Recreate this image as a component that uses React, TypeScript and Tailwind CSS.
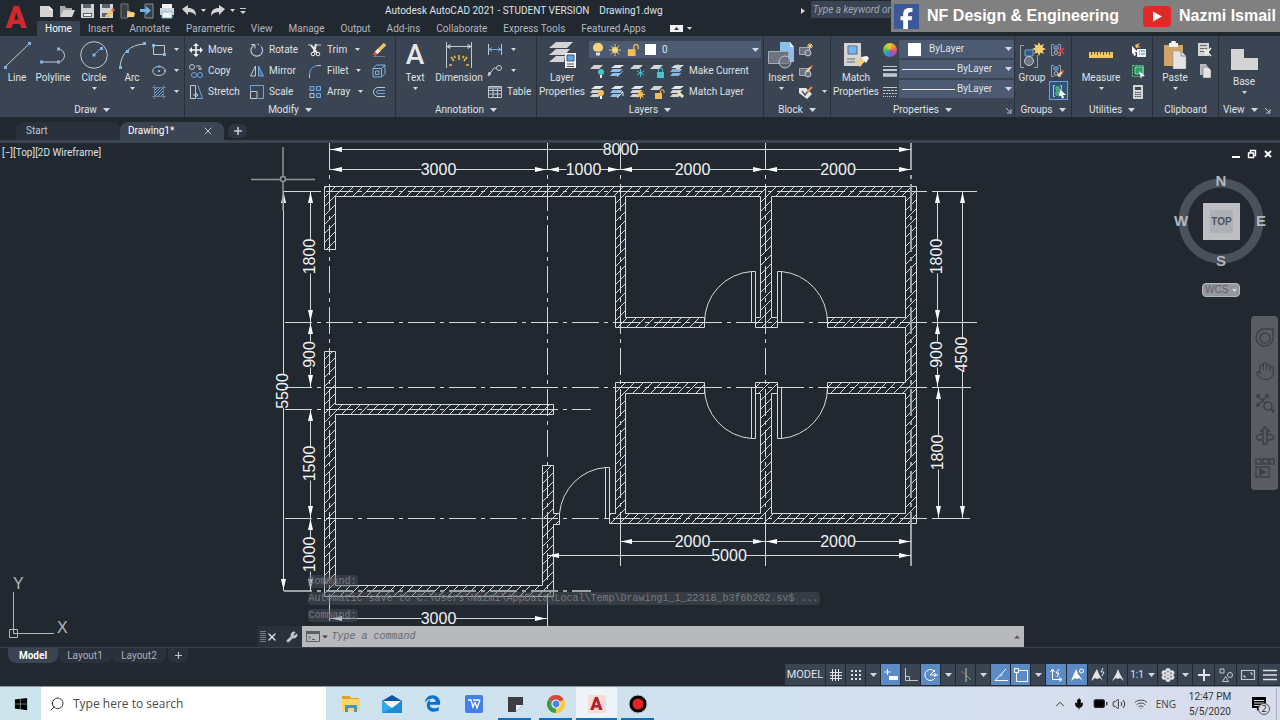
import React from "react";
import clsx from "clsx";
import { FaFacebookF, FaEdgeLegacy, FaWindows } from "react-icons/fa6";
import {
  BatteryMedium,
  ChevronUp,
  Hand,
  Mic,
  Search,
  Settings,
  Volume2,
  Wifi,
  Wrench,
  X,
} from "lucide-react";

type Kids = { children?: React.ReactNode };

/* ---------- small shared pieces ---------- */

const Icon = ({
  size = "size-4",
  box = "0 0 16 16",
  children,
}: Kids & { size?: string; box?: string }) => (
  <svg className={clsx(size, "shrink-0")} viewBox={box} fill="none" stroke="#c3c8d0" aria-hidden="true">
    {children}
  </svg>
);

const Caret = ({ wide = false }: { wide?: boolean }) => (
  <svg
    className={clsx("shrink-0", wide ? "h-[4px] w-[7px]" : "h-[3px] w-[5px]")}
    viewBox="0 0 8 4"
    preserveAspectRatio="none"
    aria-hidden="true"
  >
    <path d="M0 0h8L4 4z" fill="#d5d8de" />
  </svg>
);

const BigButton = ({
  width,
  label,
  caret,
  children,
}: Kids & { width: string; label: string; caret?: boolean }) => (
  <button className={clsx("flex shrink-0 flex-col items-center", width)}>
    <span className="flex h-8 items-center justify-center">{children}</span>
    <span className="text-center leading-[14px] whitespace-pre">{label}</span>
    {caret && (
      <span className="mt-0.5">
        <Caret />
      </span>
    )}
  </button>
);

const Tool = ({
  icon,
  label,
  caret,
  name,
}: {
  icon: React.ReactNode;
  label?: string;
  caret?: boolean;
  name?: string;
}) => (
  <button aria-label={name ?? label} className="flex h-[21px] items-center gap-1 whitespace-nowrap">
    {icon}
    {label}
    {caret && (
      <span className="ml-1">
        <Caret />
      </span>
    )}
  </button>
);

const Panel = ({
  width,
  title,
  caret = true,
  launcher,
  children,
}: Kids & { width: string; title: string; caret?: boolean; launcher?: boolean }) => (
  <section className={clsx("flex shrink-0 flex-col border-r border-[#29303c] pt-[3px]", width)}>
    <div className="flex h-[63px]">{children}</div>
    <div className="relative flex h-[15px] items-center justify-center gap-1.5 pt-px">
      {title}
      {caret && <Caret wide />}
      {launcher && (
        <svg className="absolute right-0.5 size-[7px]" viewBox="0 0 7 7" fill="none" stroke="#c3c8d0">
          <path d="M1 1l4 4M6 2v4H2" />
        </svg>
      )}
    </div>
  </section>
);

/* ---------- title bar ---------- */

const QuickAccess = () => (
  <div className="flex items-center gap-1">
    <button aria-label="New">
      <Icon>
        <path d="M1 3h9l4 4v7H1z" fill="#d4d4d4" stroke="none" />
        <path d="M10 3v4h4z" fill="#fff" stroke="none" />
      </Icon>
    </button>
    <button aria-label="Open">
      <Icon>
        <path d="M1 14V3h5l1 2h6v2H4z" fill="#a5a7a9" stroke="none" />
        <path d="M4 7h12l-3 7H1z" fill="#d4d4d4" stroke="none" />
      </Icon>
    </button>
    <button aria-label="Save">
      <Icon>
        <path d="M2 1h13v14H2z" fill="#d4d4d4" stroke="none" />
        <path d="M4 1h8v4H4zM4 10h9v4H4z" fill="#5d636b" stroke="none" />
        <path d="M5 11h7v2H5z" fill="#eee" stroke="none" />
      </Icon>
    </button>
    <button aria-label="Save As">
      <Icon>
        <path d="M1 1h13v14H1z" fill="#d4d4d4" stroke="none" />
        <path d="M3 1h8v4H3zM3 10h7v4H3z" fill="#5d636b" stroke="none" />
        <path d="M7 14l6-6" stroke="#f3c15b" strokeWidth="3" />
        <path d="M13 8l2-2" stroke="#e06a4f" strokeWidth="3" />
      </Icon>
    </button>
    <button aria-label="Open from web and mobile">
      <Icon>
        <path d="M2 1h7v14H2z" fill="#3a3d42" stroke="#77797c" />
        <path d="M8 8h3l1 1h3v5H8z" fill="#e8b953" stroke="none" />
        <path d="M9 10h7l-1 4H8z" fill="#f6d685" stroke="none" />
      </Icon>
    </button>
    <button aria-label="Save to web and mobile">
      <Icon>
        <path d="M6 1h8v14H6z" fill="#3a3d42" stroke="#8b8f94" />
        <path d="M1 6h6V3l5 4.500-5 4.500V9H1z" fill="#6fb5e8" stroke="none" />
      </Icon>
    </button>
    <button aria-label="Plot">
      <Icon>
        <path d="M3 1h10v5H3z" fill="#f2f2f2" stroke="none" />
        <path d="M1 5h14v7H1z" fill="#cfd3d8" stroke="none" />
        <path d="M3 9h10v6H3z" fill="#f6f6f6" stroke="#8ab6dc" />
      </Icon>
    </button>
    <button aria-label="Undo" className="ml-0.5">
      <Icon>
        <path d="M1 6l6-4v3c5 0 8 2 8 8-2-3-4-4-8-4v3z" fill="#d4d4d4" stroke="none" />
      </Icon>
    </button>
    <Caret />
    <button aria-label="Redo">
      <Icon>
        <path d="M15 6L9 2v3c-5 0-8 2-8 8 2-3 4-4 8-4v3z" fill="#d4d4d4" stroke="none" />
      </Icon>
    </button>
    <Caret />
    <button aria-label="Customize">
      <Icon size="size-2" box="0 0 8 8">
        <path d="M1 1.500h6" />
        <path d="M1 4h6L4 7z" fill="#d4d4d4" stroke="none" />
      </Icon>
    </button>
  </div>
);

const menuTabs = [
  "Insert",
  "Annotate",
  "Parametric",
  "View",
  "Manage",
  "Output",
  "Add-ins",
  "Collaborate",
  "Express Tools",
  "Featured Apps",
];

const Header = () => (
  <header className="relative flex h-9">
    <button
      aria-label="Application menu"
      className="w-8 shrink-0 text-center text-[31px] leading-8 font-black text-[#d0282c]"
    >
      A
    </button>
    <div className="flex min-w-0 flex-1 flex-col">
      <div className="flex h-[21px] items-center pl-[7px]">
        <QuickAccess />
        <h1 className="ml-[138px] whitespace-pre text-[#dfe2e6]">
          {"Autodesk AutoCAD 2021 - STUDENT VERSION    Drawing1.dwg"}
        </h1>
        <svg className="ml-[138px] h-1.5 w-1 shrink-0" viewBox="0 0 4 6">
          <path d="M0 0l4 3-4 3z" fill="#d5d8de" />
        </svg>
        <input
          aria-label="Search help"
          placeholder="Type a keyword or phrase"
          className="mb-0.5 ml-1.5 h-[17px] w-40 bg-[#3b4453] px-0.5 italic placeholder:text-[#a3a9b3]"
        />
      </div>
      <nav className="flex h-[15px] pl-[5px] leading-[15px] text-[#b3b8c0]">
        <a href="#home" className="bg-[#3b4453] px-2 text-white">
          Home
        </a>
        {menuTabs.map((tab) => (
          <a key={tab} href={"#" + tab.toLowerCase()} className="px-2 whitespace-nowrap">
            {tab}
          </a>
        ))}
        <button aria-label="Minimize ribbon" className="ml-4 flex items-center gap-1">
          <svg className="h-[7px] w-[13px]" viewBox="0 0 13 7">
            <path d="M0 0h13v7H0z" fill="#f1f1f1" />
            <path d="M4 5h5L6.500 2z" fill="#333" />
          </svg>
          <Caret />
        </button>
      </nav>
    </div>
    <div className="absolute top-0 right-0 flex h-8 items-center bg-[#808080] pr-1 pl-[3px] font-['Liberation_Sans',sans-serif] text-base font-bold text-white">
      <span className="mr-2 flex size-[25px] items-end justify-center bg-[#3b5998]">
        <FaFacebookF className="size-[21px]" />
      </span>
      NF Design &amp; Engineering
      <svg className="mr-2 ml-6 h-[21px] w-7" viewBox="0 0 28 21">
        <rect width="28" height="21" rx="4" fill="#e02a2a" />
        <path d="M10 5.500l9 5-9 5z" fill="#fff" />
      </svg>
      Nazmi Ismail
    </div>
  </header>
);

/* ---------- ribbon ---------- */

const DrawPanel = () => (
  <Panel width="w-[185px]" title="Draw">
    <BigButton width="w-[34px]" label="Line">
      <Icon size="size-7" box="0 0 28 28">
        <path d="M2 26L26 3" />
        <path d="M1 25h3v3H1zM25 1h3v3h-3z" fill="#7fb4e6" stroke="none" />
      </Icon>
    </BigButton>
    <BigButton width="w-[38px]" label="Polyline">
      <Icon size="size-7" box="0 0 28 28">
        <path d="M2 21h17a6.500 6.500 0 0 0 0-13" />
        <path d="M1 19.500h3v3H1zM18 19.500h3v3h-3zM18 6.500h3v3h-3z" fill="#7fb4e6" stroke="none" />
      </Icon>
    </BigButton>
    <BigButton width="w-11" label="Circle" caret>
      <Icon size="size-7" box="0 0 28 28">
        <circle cx="14" cy="14" r="13.300" />
        <path d="M14 14l7-7" stroke="#6ea8de" />
        <path d="M12.500 12.500h3v3h-3zM20 6h3v3h-3z" fill="#7fb4e6" stroke="none" />
      </Icon>
    </BigButton>
    <BigButton width="w-8" label="Arc" caret>
      <Icon size="size-7" box="0 0 28 28">
        <path d="M2 26C3 12 12 4 26 3" />
        <path d="M1 25h3v3H1zM25 1h3v3h-3zM8 9h3v3H8z" fill="#7fb4e6" stroke="none" />
      </Icon>
    </BigButton>
    <div className="ml-1 flex flex-col">
      <Tool
        name="Rectangle"
        caret
        icon={
          <Icon size="h-4 w-[14px]" box="0 0 14 16">
            <path d="M1.500 3.500h11v9h-11z" />
            <path d="M0 2h3v3H0z" fill="#7fb4e6" stroke="none" />
            <path d="M11 11h3v3h-3z" fill="#7fb4e6" stroke="none" />
          </Icon>
        }
      />
      <Tool
        name="Ellipse"
        caret
        icon={
          <Icon size="h-4 w-[14px]" box="0 0 14 16">
            <ellipse cx="7" cy="8" rx="6.300" ry="4.500" />
            <path d="M6 7h2v2H6zM12 7h2v2h-2zM6 2.500h2v2H6z" fill="#7fb4e6" stroke="none" />
          </Icon>
        }
      />
      <Tool
        name="Hatch"
        caret
        icon={
          <Icon size="h-4 w-[14px]" box="0 0 14 16">
            <path d="M2.500 1v14M11.500 1v14M0 3.500h14M0 12.500h14" stroke="#737c8b" />
            <path d="M3 6l2-2M3 9l5-5M3 12l8-8M6 12l5-5M9 12l2-2" stroke="#6ea8de" />
          </Icon>
        }
      />
    </div>
  </Panel>
);

const ModifyPanel = () => (
  <Panel width="w-[211px]" title="Modify">
    <div className="grid grid-cols-[61px_58px_64px_16px] grid-rows-3 pl-[3px]">
      <Tool
        label="Move"
        icon={
          <Icon>
            <path d="M8 3v10M3 8h10" stroke="#f2f2f2" strokeWidth="1.600" />
            <path d="M8 1l3 3H5zM8 15l3-3H5zM1 8l3-3v6zM15 8l-3-3v6z" fill="#f2f2f2" stroke="none" />
          </Icon>
        }
      />
      <Tool
        label="Rotate"
        icon={
          <Icon>
            <path d="M5.500 3a5.800 5.800 0 1 0 7 2" strokeWidth="1.200" />
            <path d="M2 2.500h4v4M8.500 2.300h1.500M11.500 3.500l1 1" />
          </Icon>
        }
      />
      <Tool
        label="Trim"
        caret
        icon={
          <Icon>
            <path d="M4 3l6 8M9 2L7 10" stroke="#f2f2f2" strokeWidth="2" />
            <circle cx="6" cy="12" r="1.800" stroke="#f2f2f2" />
            <circle cx="11" cy="12" r="1.800" stroke="#f2f2f2" />
            <path d="M1 3h3M10 3h4" />
          </Icon>
        }
      />
      <Tool
        name="Erase"
        icon={
          <Icon>
            <path d="M7 9l7-7" stroke="#f3c15b" strokeWidth="3.500" />
            <path d="M5 11l3-3" stroke="#f2f2f2" strokeWidth="3.500" />
            <path d="M3 13l2-2" stroke="#e0503e" strokeWidth="3.500" />
            <path d="M2 14.500h12" stroke="#6d7a8c" />
          </Icon>
        }
      />
      <Tool
        label="Copy"
        icon={
          <Icon>
            <circle cx="4" cy="4" r="2.500" />
            <path d="M8 3h4v3M10 5l2 2 2-2" />
            <circle cx="6" cy="12" r="2.500" stroke="#6ea8de" />
            <circle cx="12" cy="12" r="2.500" stroke="#6ea8de" />
          </Icon>
        }
      />
      <Tool
        label="Mirror"
        icon={
          <Icon>
            <path d="M6.500 3v10h-5z" />
            <path d="M9.500 3v10h5z" fill="#46719a" stroke="#6ea8de" />
          </Icon>
        }
      />
      <Tool
        label="Fillet"
        caret
        icon={
          <Icon>
            <path d="M2.500 14v-2C2.500 6 6 2.500 12 2.500" stroke="#6ea8de" />
            <path d="M10 2.500h4M2.500 12v3" />
          </Icon>
        }
      />
      <Tool
        name="Explode"
        icon={
          <Icon>
            <path d="M2 5.500h8.500V14H2zM2 5.500L5.500 2H14v8.500L10.500 14M14 2l-3.500 3.500" stroke="#7fb4e6" />
            <path d="M4.500 8h3.500v3.500H4.500z" stroke="#7fb4e6" />
          </Icon>
        }
      />
      <Tool
        label="Stretch"
        icon={
          <Icon>
            <path d="M2.500 14.500v-13h5v13z" />
            <path d="M5 11h4M8 9l2 2-2 2" />
            <path d="M10 1.500l4.500 13H9" stroke="#6ea8de" />
          </Icon>
        }
      />
      <Tool
        label="Scale"
        icon={
          <Icon>
            <path d="M1.500 7V1.500h13v13H9" stroke="#6ea8de" />
            <path d="M1.500 7.500h6.500v7H1.500z" />
          </Icon>
        }
      />
      <Tool
        label="Array"
        caret
        icon={
          <Icon>
            <path d="M3 2.500h4v4H3zM9.500 2.500h4v4h-4zM9.500 9.500h4v4h-4z" fill="#33597f" stroke="#6ea8de" />
            <path d="M3 9.500h4v4H3z" />
          </Icon>
        }
      />
      <Tool
        name="Offset"
        icon={
          <Icon>
            <path d="M14 3.500H7a4.500 4.500 0 0 0 0 9h7" />
            <path d="M14 6.500H7a1.500 1.500 0 0 0 0 3h7" stroke="#6ea8de" />
          </Icon>
        }
      />
    </div>
  </Panel>
);

const AnnotationPanel = () => (
  <Panel width="w-[141px]" title="Annotation">
    <BigButton width="w-[38px]" label="Text" caret>
      <span className="text-[28px] leading-8 font-medium text-[#e4e6ea]">A</span>
    </BigButton>
    <BigButton width="w-[50px]" label="Dimension">
      <Icon size="size-7" box="0 0 28 28">
        <path d="M1.500 1v26M26.500 1v26M2 5.500h24M2 5.500l3-2v4zM26 5.500l-3-2v4z" />
        <path
          d="M14 19v-5M9 20l-3-4M19 20l3-4M7 24H4M21 24h3M10.500 17L9 15M17.500 17l1.500-2"
          stroke="#f0b840"
          strokeWidth="1.600"
        />
      </Icon>
    </BigButton>
    <div className="ml-[3px] flex flex-col">
      <Tool
        name="Linear dimension"
        caret
        icon={
          <Icon>
            <path d="M2 7.500h12M5 5.500l-3 2 3 2M11 5.500l3 2-3 2" stroke="#6ea8de" />
            <path d="M1.500 2v11M14.500 2v11" />
          </Icon>
        }
      />
      <Tool
        name="Leader"
        caret
        icon={
          <Icon>
            <circle cx="12" cy="5" r="2.500" />
            <path d="M9.500 5H7l-5 7" />
            <path d="M1 13l1-4 2 2z" fill="#c3c8d0" />
          </Icon>
        }
      />
      <Tool
        label="Table"
        icon={
          <Icon>
            <path d="M1.500 2.500h13v11h-13zM1.500 6.500h13M1.500 10h13M6 2.500v11M10.500 2.500v11" />
            <path d="M2 3h12v2H2z" fill="#8e96a3" stroke="none" />
          </Icon>
        }
      />
    </div>
  </Panel>
);

const Sheets = ({ tint = "#d4d4d4" }: { tint?: string }) => (
  <>
    <path d="M6 2h9l-4 3H2z" fill="#e4e6ea" stroke="none" />
    <path d="M3.500 6h10l-3 3H1z" fill={tint} stroke="none" />
    <path d="M3.500 10h9l-3 3H1z" fill={tint} stroke="none" />
  </>
);

const Sheet = () => <path d="M5 2h9l-4 4H1z" fill="#d4d4d4" stroke="none" />;

const LayersPanel = () => (
  <Panel width="w-[227px]" title="Layers">
    <BigButton width="w-[50px]" label={"Layer\nProperties"}>
      <Icon size="size-7" box="0 0 28 28">
        <path d="M8 1h17l-6 6H1zM8 8h14l-5 6H1zM8 15h9l-1 6H1z" fill="#d4d4d4" stroke="none" />
        <path d="M17 12h11v15H17z" fill="#f4f4f4" stroke="none" />
        <path d="M19 14h7v6h-7z" fill="#5aa5e2" stroke="#3d5873" />
        <path d="M19 23h7M19 25.500h7" stroke="#444" />
      </Icon>
    </BigButton>
    <div className="flex flex-1 flex-col pr-0.5 pl-0.5">
      <div className="mt-0.5 mb-0.5 flex h-[17px] items-center gap-1.5 bg-[#4c5a72] pr-0.5 pl-1">
        <Icon size="h-[13px] w-[10px]" box="0 0 10 13">
          <path d="M5 0a4.500 4.500 0 0 0-2.500 8.500h5A4.500 4.500 0 0 0 5 0z" fill="#f8d57c" stroke="none" />
          <path d="M3 9.500h4v3H3z" fill="#ddd" stroke="none" />
        </Icon>
        <Icon size="size-3" box="0 0 14 14">
          <circle cx="7" cy="7" r="3.500" fill="#f8d57c" stroke="none" />
          <path d="M7 0v14M0 7h14M2 2l10 10M12 2L2 12" stroke="#f8d57c" />
        </Icon>
        <Icon size="size-3" box="0 0 14 14">
          <path d="M1 6h9v8H1z" fill="#f3bd55" stroke="none" />
          <path d="M8 6V3a2.500 2.500 0 0 1 5 0v3" stroke="#f3bd55" strokeWidth="1.500" />
        </Icon>
        <span className="size-[11px] bg-white" />
        <select aria-label="Layer" className="min-w-0 flex-1 appearance-none">
          <option>0</option>
        </select>
        <Caret wide />
      </div>
      <div className="flex items-center gap-1">
        <Tool name="Off" icon={<Icon><Sheet /><circle cx="12" cy="9" r="3" fill="#45c5c9" stroke="none" /><path d="M11 12h2v3h-2z" fill="#e4e6ea" stroke="none" /></Icon>} />
        <Tool name="Isolate" icon={<Icon><Sheets tint="#8cc0ec" /><path d="M8 14l6-6" stroke="#7fb4e6" /></Icon>} />
        <Tool name="Freeze" icon={<Icon><Sheet /><path d="M11.500 6v8M8 8l7 4M15 8l-7 4" stroke="#45c5c9" /></Icon>} />
        <Tool name="Lock" icon={<Icon><Sheet /><path d="M8 9h7v6H8z" fill="#45c5c9" stroke="none" /><path d="M9.500 9V7a2 2 0 0 1 4 0v2" stroke="#45c5c9" /></Icon>} />
        <Tool label="Make Current" icon={<Icon><Sheets tint="#7fb4e6" /><circle cx="9" cy="4" r="2.500" fill="#d4d4d4" stroke="none" /></Icon>} />
      </div>
      <div className="flex items-center gap-1">
        <Tool name="Turn all on" icon={<Icon><Sheets /><circle cx="12" cy="9" r="3" fill="#f3bd55" stroke="none" /><path d="M11 12h2v3h-2z" fill="#fff" stroke="none" /></Icon>} />
        <Tool name="Unisolate" icon={<Icon><Sheets tint="#8cc0ec" /><path d="M8 14l6-6M10 8h4v4" stroke="#e4e6ea" /></Icon>} />
        <Tool name="Thaw all" icon={<Icon><Sheets /><circle cx="11.500" cy="10.500" r="2.500" fill="#f3bd55" stroke="none" /><path d="M11.500 6v9M7 10.500h9M8.500 7.500l6 6M14.500 7.500l-6 6" stroke="#f3bd55" /></Icon>} />
        <Tool name="Unlock" icon={<Icon><Sheet /><path d="M6 9h7v6H6z" fill="#f3bd55" stroke="none" /><path d="M11.500 9V7a1.800 1.800 0 0 1 3.500 0v2" stroke="#f3bd55" /></Icon>} />
        <Tool label="Match Layer" icon={<Icon><Sheets /><path d="M9 8l5 5" stroke="#f7e3ad" strokeWidth="3" /></Icon>} />
      </div>
    </div>
  </Panel>
);

const BlockIcon = ({ children }: Kids) => (
  <Icon>
    <path d="M1.500 5.500h10v7h-10z" fill="#6d7380" stroke="#a5abb5" />
    <circle cx="10" cy="11" r="3" fill="#6d7380" stroke="#c3c8d0" />
    {children}
  </Icon>
);

const BlockPanel = () => (
  <Panel width="w-[67px]" title="Block">
    <BigButton width="w-[34px]" label="Insert" caret>
      <Icon size="size-7" box="0 0 28 28">
        <path d="M13 1h10l4 5v15H13z" fill="#8cc0ec" stroke="none" />
        <path d="M23 1v5h4z" fill="#d8ecfb" stroke="none" />
        <path d="M1.500 10.500h20v12h-20z" fill="#6d7380" stroke="#a5abb5" />
        <circle cx="18" cy="21" r="6" fill="#6d738099" stroke="#c3c8d0" />
      </Icon>
    </BigButton>
    <div className="flex flex-col">
      <Tool
        name="Create block"
        icon={
          <BlockIcon>
            <path d="M12 1v6M9 4h6M10 2l4 4M14 2l-4 4" stroke="#f8d57c" />
          </BlockIcon>
        }
      />
      <Tool
        name="Edit block"
        icon={
          <BlockIcon>
            <path d="M8 9l5-5" stroke="#f3d38c" strokeWidth="2" />
            <path d="M13 4l1.500-1.500" stroke="#e0503e" strokeWidth="2" />
          </BlockIcon>
        }
      />
      <Tool
        name="Edit attributes"
        caret
        icon={
          <Icon>
            <path d="M1 4h7l6 6-5 5-8-6z" fill="#e4e6ea" stroke="none" />
            <path d="M4 7l3 4 4-5" stroke="#555" strokeWidth="1.500" />
            <path d="M9 8l5-5" stroke="#e98b5a" strokeWidth="2" />
          </Icon>
        }
      />
    </div>
  </Panel>
);

const ByLayer = ({ label, children }: Kids & { label: string }) => (
  <div className="flex h-[18px] items-center bg-[#4c5a72] pr-0.5 pl-[3px]">
    {children}
    <select aria-label={label} className="min-w-0 flex-1 appearance-none">
      <option>ByLayer</option>
    </select>
    <Caret wide />
  </div>
);

const PropertiesPanel = () => (
  <Panel width="w-[184px]" title="Properties" launcher>
    <BigButton width="w-[50px]" label={"Match\nProperties"}>
      <Icon size="size-7" box="0 0 28 28">
        <path d="M2 2h17v23H2z" fill="#d4d4d4" stroke="none" />
        <path d="M6 5h9v8H6z" fill="#74b4ea" stroke="#4f6f8d" />
        <path d="M5 18h8M5 21h8" stroke="#666" />
        <path d="M14 21l5-5 4 4-5 6z" fill="#efcf86" stroke="none" />
        <path d="M19 16l6-1 2 2-3 5z" fill="#fff" stroke="none" />
      </Icon>
    </BigButton>
    <div className="flex w-[18px] flex-col items-center">
      <span className="flex h-[21px] items-center">
        <span className="size-[14px] rounded-full bg-[conic-gradient(#f1c232,#e98b3a,#d84b8a,#8757c8,#3c8bdc,#3cb371,#b5c93a,#f1c232)]" />
      </span>
      <Tool
        name="Lineweight"
        icon={
          <Icon size="h-4 w-[14px]" box="0 0 14 16">
            <path d="M0 3.500h14" />
            <path d="M0 7h14" strokeWidth="2" />
            <path d="M0 12h14" strokeWidth="3.500" />
          </Icon>
        }
      />
      <Tool
        name="Linetype"
        icon={
          <Icon size="h-4 w-[14px]" box="0 0 14 16">
            <path d="M0 3.500h14" />
            <path d="M0 6.500h14" strokeDasharray="3 1" />
            <path d="M0 9.500h14" strokeDasharray="2 1" />
            <path d="M0 12.500h14" strokeDasharray="1 1" />
          </Icon>
        }
      />
    </div>
    <div className="mt-px flex flex-1 flex-col gap-0.5">
      <ByLayer label="Object color">
        <span className="mr-2 ml-1.5 size-[13px] bg-white" />
      </ByLayer>
      <ByLayer label="Lineweight">
        <span className="mr-0.5 h-px w-[53px] bg-[#e4e6ea]" />
      </ByLayer>
      <ByLayer label="Linetype">
        <span className="mr-0.5 h-px w-[53px] bg-[#e4e6ea]" />
      </ByLayer>
    </div>
  </Panel>
);

const GroupShape = ({ children }: Kids) => (
  <Icon>
    <path d="M5 2.500H2.500v11H5M9 2.500h2.500v11H9" stroke="#9aa1ac" />
    <path d="M5 4h4v3H5z" fill="#46719a" stroke="#6ea8de" />
    <circle cx="7" cy="10.500" r="1.800" />
    {children}
  </Icon>
);

const GroupsPanel = () => (
  <Panel width="w-[57px]" title="Groups">
    <BigButton width="w-[34px]" label="Group">
      <Icon size="size-7" box="0 0 28 28">
        <path d="M6 4.500H2.500v22H6M16 26.500h3.500V14" stroke="#9aa1ac" />
        <path d="M7 9h8v6H7z" fill="#33597f" stroke="#6ea8de" />
        <circle cx="11" cy="20" r="4.500" fill="#6d7380" />
        <path d="M21 1l1.500 3.500L26 3l-1.500 3.500L28 8l-3.500 1.500L26 13l-3.500-1.500L21 15l-1.500-3.500L16 13l1.500-3.500L14 8l3.500-1.500L16 3l3.500 1.500z" fill="#f8cf72" stroke="none" />
      </Icon>
    </BigButton>
    <div className="flex flex-col">
      <Tool
        name="Ungroup"
        icon={
          <GroupShape>
            <path d="M9 6l6 6M15 6l-6 6" stroke="#e0404a" strokeWidth="1.600" />
          </GroupShape>
        }
      />
      <Tool
        name="Group edit"
        icon={
          <GroupShape>
            <path d="M9 13l4-4" stroke="#f3d38c" strokeWidth="2.500" />
            <path d="M13 9l1.500-1.500" stroke="#e0503e" strokeWidth="2.500" />
          </GroupShape>
        }
      />
      <button
        aria-label="Group selection"
        className="flex size-[19px] items-center justify-center border border-[#62a4dd] bg-[#2d557a]"
      >
        <Icon>
          <path d="M4 2.500H2.500v11H4M9 2.500h1.500v4" />
          <path d="M5 4h3v3H5zM5 9h3v3H5z" fill="#2e8b57" stroke="#5fd08f" />
          <path d="M9 6l6 6h-3l1 3-2 .500-1-3-2 1z" fill="#fff" stroke="none" />
        </Icon>
      </button>
    </div>
  </Panel>
);

const UtilitiesPanel = () => (
  <Panel width="w-[81px]" title="Utilities">
    <BigButton width="w-[58px]" label="Measure" caret>
      <Icon size="h-7 w-6" box="0 0 24 28">
        <path d="M0 11h24v6H0z" fill="#f0c765" stroke="none" />
        <path d="M2.500 11v3M5.500 11v2M8.500 11v3M11.500 11v2M14.500 11v3M17.500 11v2M20.500 11v3" stroke="#5a4b20" />
      </Icon>
    </BigButton>
    <div className="flex flex-col">
      <Tool
        name="Quick select"
        icon={
          <Icon>
            <path d="M7 7h9v8H7z" fill="#f1f1f1" stroke="none" />
            <path d="M9 9h1M11 9h4M9 12h1M11 12h4" stroke="#3f7fc0" />
            <path d="M2 4l6 6H5l1 3-2 1-1-3-1 1z" fill="#fff" stroke="none" />
            <path d="M5 3l5-2-2 3 3 1-5 1z" fill="#f3bd55" stroke="none" />
          </Icon>
        }
      />
      <Tool
        name="Select all"
        icon={
          <Icon>
            <path d="M2.500 2.500h11v11h-11z" stroke="#5fd08f" strokeDasharray="2 1" />
            <path d="M5 4h8v7H5z" fill="#2fa166" stroke="#7ce0a6" />
            <path d="M9 8l6 5h-3l-1 3z" fill="#fff" stroke="none" />
          </Icon>
        }
      />
      <Tool
        name="Quick calculator"
        icon={
          <Icon>
            <path d="M3 1h10v14H3z" fill="#d4d4d4" stroke="none" />
            <path d="M5 3h6v3H5z" fill="#444b57" stroke="none" />
            <path d="M5 8.500h6M5 10.500h6M5 12.500h6" stroke="#444b57" strokeDasharray="1.500 .700" />
          </Icon>
        }
      />
    </div>
  </Panel>
);

const ClipboardPanel = () => (
  <Panel width="w-[66px]" title="Clipboard" caret={false}>
    <BigButton width="w-11" label="Paste" caret>
      <Icon size="size-7" box="0 0 28 28">
        <path d="M3 4h19v21H3z" fill="#d1a569" stroke="none" />
        <path d="M8 2h2a2.500 2.500 0 0 1 5 0h2v4H8z" fill="#f1f1f1" stroke="none" />
        <path d="M12 10h8l5 5v13H12z" fill="#e4e4e4" stroke="#888" strokeWidth=".500" />
        <path d="M20 10v5h5" stroke="#888" />
      </Icon>
    </BigButton>
    <div className="flex flex-col">
      <Tool
        name="Cut"
        icon={
          <Icon>
            <path d="M1 1h11v13H1z" fill="#d4d4d4" stroke="none" />
            <path d="M3 3.500h7M3 6.500h7M3 9.500h4" stroke="#666" />
            <path d="M7 7l7 7M14 6l-6 7" stroke="#f1f1f1" strokeWidth="1.600" />
          </Icon>
        }
      />
      <Tool
        name="Copy clip"
        icon={
          <Icon>
            <path d="M3 1h6l2 3v8H3z" fill="#b9bcc1" stroke="none" />
            <path d="M6 4h5l3 3v8H6z" fill="#e4e4e4" stroke="#555" strokeWidth=".500" />
          </Icon>
        }
      />
    </div>
  </Panel>
);

const Ribbon = () => (
  <div className="flex overflow-hidden bg-[#3b4453] text-[#dfe2e6]">
    <DrawPanel />
    <ModifyPanel />
    <AnnotationPanel />
    <LayersPanel />
    <BlockPanel />
    <PropertiesPanel />
    <GroupsPanel />
    <UtilitiesPanel />
    <ClipboardPanel />
    <section className="flex flex-1 flex-col pt-[3px]">
      <div className="flex h-[63px] pt-1">
        <BigButton width="w-[50px]" label="Base" caret>
          <Icon size="size-7" box="0 0 28 28">
            <path d="M1 4h13v9h14v12H1z" fill="#d4d4d4" stroke="none" />
          </Icon>
        </BigButton>
      </div>
      <div className="flex h-[15px] items-center gap-1.5 pt-px pl-1">
        View
        <Caret wide />
        <svg className="size-[7px]" viewBox="0 0 7 7" fill="none" stroke="#c3c8d0">
          <path d="M1 1l4 4M6 2v4H2" />
        </svg>
      </div>
    </section>
  </div>
);

const FileTabs = () => (
  <div className="flex h-[23px] items-end pl-4 text-[#c3c8d0]">
    <button className="h-[18px] w-[104px] rounded-t-lg bg-[#2a313d] pl-2.5 text-left">Start</button>
    <div className="flex h-[18px] w-[104px] items-center justify-between rounded-t-lg bg-[#3b4453] pr-2.5 pl-2 text-white">
      <button>Drawing1*</button>
      <button aria-label="Close drawing">
        <X className="size-3 text-[#c3c8d0]" />
      </button>
    </div>
    <button
      aria-label="New drawing"
      className="mb-0.5 ml-1 flex h-[14px] w-[19px] items-center justify-center rounded-md bg-[#2e3643]"
    >
      <Icon size="size-2" box="0 0 8 8">
        <path d="M4 0v8M0 4h8" strokeWidth="1.600" />
      </Icon>
    </button>
  </div>
);

/* ---------- drawing area ---------- */

const DimH = ({ x1, x2, y, label }: { x1: number; x2: number; y: number; label: string }) => {
  const mid = (x1 + x2) / 2;
  return (
    <g>
      <path d={`M${x1} ${y}H${mid - 17}M${mid + 17} ${y}H${x2}`} />
      <path
        d={`M${x1 + 1} ${y}l11-2.500v5zM${x2 - 1} ${y}l-11-2.500v5z`}
        fill="#fff"
        stroke="none"
      />
      <text x={mid} y={y + 5.5} textAnchor="middle" fill="#f1f3f4" stroke="none">
        {label}
      </text>
    </g>
  );
};

const DimV = ({ y1, y2, x, label }: { y1: number; y2: number; x: number; label: string }) => {
  const mid = (y1 + y2) / 2;
  const half = label.length > 3 ? 17 : 13;
  return (
    <g>
      <path d={`M${x} ${y1}V${mid - half}M${x} ${mid + half}V${y2}`} />
      <path
        d={`M${x} ${y1 + 1}l-2.500 11h5zM${x} ${y2 - 1}l-2.500-11h5z`}
        fill="#fff"
        stroke="none"
      />
      <text
        transform={`translate(${x + 4.5} ${mid}) rotate(-90)`}
        textAnchor="middle"
        fill="#f1f3f4"
        stroke="none"
      >
        {label}
      </text>
    </g>
  );
};

const FloorPlan = () => (
  <svg
    className="h-[504px] w-full font-['Liberation_Sans',sans-serif] text-[16px]"
    viewBox="0 143 1280 504"
    fill="none"
    stroke="#d3dadb"
  >
    <defs>
      <pattern id="hatch" width="9" height="9" patternUnits="userSpaceOnUse">
        <path d="M-1 10L10 -1" shapeRendering="crispEdges" />
      </pattern>
    </defs>

    {/* walls */}
    <g fill="url(#hatch)">
      <path d="M324.500 186.500H916.500V523.500H609.500V513.500H615.500V382.500H704.500V393.500H625.500V513.500H760.500V393.500H755.500V382.500H777.500V393.500H771.500V513.500H905.500V393.500H827.500V382.500H905.500V327.500H827.500V317.500H905.500V196.500H771.500V317.500H777.500V327.500H755.500V317.500H760.500V196.500H625.500V317.500H704.500V327.500H615.500V196.500H335.500V249.500H324.500z" />
      <path d="M324.500 351.500H335.500V404.500H553.500V414.500H335.500V585.500H542.500V465.500H553.500V513.500H559.500V524.500H553.500V596.500H324.500z" />
    </g>

    {/* centre lines */}
    <g strokeDasharray="27 5 4 5">
      <path d="M329.500 143V633M547.500 143V633M620.500 143V566M765.500 143V566" />
      <path d="M285 191.500H977M285 322.500H977M285 387.500H971M285 409.500H591M285 518.500H970" />
      <path d="M911 143V566M285 591H591" stroke="#9da3a8" strokeWidth="2" />
    </g>
    <path d="M283 191.500H317M936 191.500H977M936 322.500H977M936 387.500H971M936 518.500H970M620.500 535V566M765.500 535V566M547.500 600V633" />
    <path d="M284 591H312M911 535V566" stroke="#9da3a8" strokeWidth="2" />

    {/* doors */}
    <path d="M751.500 322.500V271.500H755.500V317M704.500 322.500A50.500 51 0 0 1 751.500 271.500" />
    <path d="M781.500 322.500V271.500H777.500V317M827.500 322.500A50.500 51 0 0 0 781.500 271.500" />
    <path d="M751.500 387.500V438.500H755.500V393M704.500 387.500A50.500 51 0 0 0 751.500 438.500" />
    <path d="M781.500 387.500V438.500H777.500V393M827.500 387.500A50.500 51 0 0 1 781.500 438.500" />
    <path d="M605.500 518.500V467.500H609.500V513M605.500 518.500H609.500M559.500 513.500A50 51 0 0 1 605.500 467.500" />

    {/* dimensions */}
    <DimH x1={330} x2={911} y={149.5} label="8000" />
    <DimH x1={330} x2={547} y={169.5} label="3000" />
    <DimH x1={547} x2={620} y={169.5} label="1000" />
    <DimH x1={620} x2={765} y={169.5} label="2000" />
    <DimH x1={765} x2={911} y={169.5} label="2000" />
    <DimH x1={620} x2={765} y={541.5} label="2000" />
    <DimH x1={765} x2={911} y={541.5} label="2000" />
    <DimH x1={547} x2={911} y={555.5} label="5000" />
    <DimH x1={330} x2={547} y={618.5} label="3000" />
    <DimV y1={191} y2={591} x={283.5} label="5500" />
    <DimV y1={191} y2={322} x={310.5} label="1800" />
    <DimV y1={322} y2={387} x={310.5} label="900" />
    <DimV y1={409} y2={518} x={310.5} label="1500" />
    <DimV y1={518} y2={591} x={310.5} label="1000" />
    <DimV y1={191} y2={322} x={937.5} label="1800" />
    <DimV y1={322} y2={387} x={937.5} label="900" />
    <DimV y1={387} y2={518} x={938.5} label="1800" />
    <DimV y1={191} y2={518} x={962.5} label="4500" />

    {/* crosshair */}
    <g stroke="#8f9499" strokeWidth="1.500">
      <path d="M251 179.500H280M286 179.500H315M283 147V176M283 182V211" />
      <circle cx="283" cy="179" r="2.500" />
    </g>
  </svg>
);

const UcsIcon = () => (
  <svg
    className="absolute bottom-2 left-2 h-16 w-16 font-['Liberation_Sans',sans-serif] text-[16px]"
    viewBox="0 0 64 64"
    fill="none"
    stroke="#b4b9bd"
  >
    <path d="M1.500 54.500h8v8h-8zM5.500 58V17M5 58.500h41" />
    <text x="5" y="14" fill="#b4b9bd" stroke="none">
      Y
    </text>
    <text x="49" y="58" fill="#b4b9bd" stroke="none">
      X
    </text>
  </svg>
);

const ViewCube = () => (
  <div className="absolute top-[30px] right-3 flex w-[94px] flex-col items-center">
    <svg
      className="h-24 w-[94px] font-['Liberation_Sans',sans-serif] text-[15px] font-bold"
      viewBox="0 0 94 96"
      fill="#b4b7bc"
      textAnchor="middle"
    >
      <circle cx="47" cy="48" r="38" fill="none" stroke="#4a515b" strokeWidth="9" />
      <path d="M29 30h37v37H29z" fill="#bdbec1" />
      <path d="M36 37h23v23H36z" fill="#adb0b5" />
      <text x="47.500" y="52" fontSize="10" fill="#4d535d">
        TOP
      </text>
      <text x="47" y="13">N</text>
      <text x="47" y="93">S</text>
      <text x="7" y="53">W</text>
      <text x="87" y="53">E</text>
    </svg>
    <button className="mt-3.5 flex h-[14px] w-[38px] items-center gap-1 rounded border border-[#b4b8bd] bg-[#94989e] pl-0.5 font-['Liberation_Sans',sans-serif] text-[#5d636b]">
      WCS
      <Caret />
    </button>
  </div>
);

const NavBar = () => (
  <div className="absolute top-[173px] right-0.5 flex h-[174px] w-[27px] flex-col items-center justify-between rounded-sm bg-[#595d62] py-3 text-[#3c4147]">
    <button aria-label="Steering wheel">
      <svg className="size-5" viewBox="0 0 20 20" fill="none" stroke="currentColor" strokeWidth="1.500">
        <path d="M10 1h8v9a8.500 8.500 0 1 1-8-9z" />
        <circle cx="10" cy="10" r="5" />
      </svg>
    </button>
    <button aria-label="Pan">
      <Hand className="size-5" strokeWidth={1.5} />
    </button>
    <button aria-label="Zoom extents">
      <svg className="size-5" viewBox="0 0 20 20" fill="none" stroke="currentColor" strokeWidth="1.500">
        <path d="M2 2l9 9M13 2L2 13M2 5V2h3M10 2h3v3M2 10v3h3" />
        <circle cx="13" cy="13" r="4" />
        <path d="M16 16l3 3" strokeWidth="2.500" />
      </svg>
    </button>
    <button aria-label="Orbit">
      <svg className="size-5" viewBox="0 0 20 20" fill="none" stroke="currentColor" strokeWidth="1.500">
        <path d="M8 18V5H6l4-4 4 4h-2v13z" />
        <path d="M8 8c-9 1-9 6 0 6M12 8c9 1 9 6 0 6M4 15l-3-3" />
      </svg>
    </button>
    <button aria-label="Show motion">
      <svg className="size-5" viewBox="0 0 20 20" fill="none" stroke="currentColor" strokeWidth="1.500">
        <path d="M1 1h5v5H1zM8 1h5v5H8zM15 1h4v5h-4zM1 9h13v10H1z" />
        <path d="M5 11l5 3-5 3z" fill="currentColor" />
      </svg>
    </button>
  </div>
);

const CommandLine = () => (
  <div className="absolute inset-x-0 bottom-0 mx-auto w-[767px] font-['Liberation_Mono',monospace]">
    <div className="ml-[51px] flex flex-col items-start gap-1 pb-1 leading-[13px] text-[#767b80]">
      <p className="rounded-sm bg-[#555b6266] px-px">Command:</p>
      <p className="rounded-sm bg-[#555b6266] px-px">
        Automatic save to C:\Users\Nazmi\AppData\Local\Temp\Drawing1_1_22318_b3f6b202.sv$ ...
      </p>
      <p className="rounded-sm bg-[#555b6266] px-px">Command:</p>
    </div>
    <form className="flex h-[21px] items-center bg-[#2a313c]">
      <svg className="ml-[3px] h-3 w-1.5" viewBox="0 0 6 12" stroke="#c3c8d0" fill="none">
        <path d="M1 0v12M3 0v12M5 0v12" strokeDasharray="1 1" />
      </svg>
      <button type="button" aria-label="Close command line">
        <X className="size-3 text-[#d5d8de]" strokeWidth={3} />
      </button>
      <button type="button" aria-label="Customize command line" className="ml-2">
        <Wrench className="size-3 fill-[#c3c8d0] text-[#c3c8d0]" />
      </button>
      <div className="ml-1 flex h-[21px] flex-1 items-center bg-[#b8b9bc] pr-1 pl-1">
        <svg className="h-[11px] w-[14px]" viewBox="0 0 14 11" fill="none" stroke="#5a5d61">
          <path d="M.500 .500h13v10H.500zM2.500 5l2 1.500-2 1.500M6 8.500h3" />
          <path d="M0 0h14v3H0z" fill="#5a5d61" stroke="none" />
        </svg>
        <svg className="ml-0.5 h-1 w-1.5" viewBox="0 0 8 4">
          <path d="M0 0h8L4 4z" fill="#444" />
        </svg>
        <input
          aria-label="Command"
          placeholder="Type a command"
          className="ml-1 min-w-0 flex-1 italic placeholder:text-[#65686c]"
        />
        <svg className="h-1 w-1.5" viewBox="0 0 8 4">
          <path d="M0 4h8L4 0z" fill="#555" />
        </svg>
      </div>
    </form>
  </div>
);

const Viewport = () => (
  <main className="relative flex-1 overflow-hidden border-t-3 border-[#3b4453]">
    <FloorPlan />
    <div className="absolute top-1 left-0.5 leading-3 text-[#dfe2e6]">[−][Top][2D Wireframe]</div>
    <div className="absolute top-1.5 right-[7px] flex items-center gap-1.5">
      <button aria-label="Minimize viewport">
        <Icon size="size-2.5" box="0 0 10 10">
          <path d="M1 8h8" stroke="#fff" strokeWidth="2" />
        </Icon>
      </button>
      <button aria-label="Restore viewport">
        <Icon size="size-2.5" box="0 0 10 10">
          <path d="M1.500 4h5v4.500h-5zM3.500 3.500v-2h5v5H7" stroke="#fff" strokeWidth="1.400" />
        </Icon>
      </button>
      <button aria-label="Close viewport">
        <Icon size="size-2.5" box="0 0 10 10">
          <path d="M2 2l6 6M8 2L2 8" stroke="#fff" strokeWidth="2" />
        </Icon>
      </button>
    </div>
    <ViewCube />
    <NavBar />
    <UcsIcon />
    <CommandLine />
  </main>
);

/* ---------- layout tabs and status bar ---------- */

const LayoutTabs = () => (
  <div className="flex h-[17px] items-start border-t border-[#39414c] pl-2 text-[#aab0ba]">
    <button className="h-[15px] w-[50px] rounded-b-lg bg-[#3b4453] font-bold text-white">Model</button>
    <button className="h-[15px] w-[54px] rounded-b-lg bg-[#2a313d]">Layout1</button>
    <button className="h-[15px] w-[54px] rounded-b-lg bg-[#2a313d]">Layout2</button>
    <button
      aria-label="New layout"
      className="ml-0.5 flex h-[15px] w-5 items-center justify-center rounded-b-lg bg-[#2a313d]"
    >
      <Icon size="size-[7px]" box="0 0 8 8">
        <path d="M4 0v8M0 4h8" strokeWidth="1.300" />
      </Icon>
    </button>
  </div>
);

const Status = ({
  name,
  on,
  width = "w-[19px]",
  children,
}: Kids & { name: string; on?: boolean; width?: string }) => (
  <button
    aria-label={name}
    className={clsx(
      "flex shrink-0 items-center justify-center gap-1",
      width,
      on ? "bg-[#5b8ac5]" : "bg-[#3b4453]"
    )}
  >
    {children}
  </button>
);

const StatusCaret = ({ name }: { name: string }) => (
  <Status name={name} width="w-[14px]">
    <Caret wide />
  </Status>
);

const StatusBar = () => (
  <div className="flex h-[22px] justify-end gap-px pb-px text-[#dfe2e6]">
    <Status name="Model" width="w-10">
      <span className="text-[11px]">MODEL</span>
    </Status>
    <Status name="Grid">
      <Icon size="size-[14px]" box="0 0 14 14">
        <path d="M3.500 1v12M6.500 1v12M9.500 1v12M1 4.500h12M1 7.500h12M1 10.500h12" stroke="#dfe2e6" />
      </Icon>
    </Status>
    <Status name="Snap">
      <Icon size="size-[14px]" box="0 0 14 14">
        <path d="M2 3h10M2 7h10M2 11h10" stroke="#dfe2e6" strokeWidth="2" strokeDasharray="2 2" />
      </Icon>
    </Status>
    <StatusCaret name="Snap options" />
    <Status name="Dynamic input" on>
      <Icon>
        <path d="M4.500 2v6M1.500 5h6" stroke="#fff" />
        <path d="M6 9h9v4H6z" fill="#fff" stroke="none" />
      </Icon>
    </Status>
    <Status name="Ortho">
      <Icon>
        <path d="M2.500 1v12.500H15M2.500 9.500h4v4" />
      </Icon>
    </Status>
    <Status name="Polar tracking" on>
      <Icon>
        <path d="M12 11a5.500 5.500 0 1 1 0-6M7 8h8M7 8l5-5M12 6v4" stroke="#fff" />
      </Icon>
    </Status>
    <StatusCaret name="Polar options" />
    <Status name="Isometric drafting">
      <Icon>
        <path d="M8 1v14" />
        <path d="M8 8L3 4" stroke="#c35a5a" />
        <path d="M8 8l5 5" stroke="#6fbf73" />
      </Icon>
    </Status>
    <StatusCaret name="Isometric options" />
    <Status name="Object snap tracking" on>
      <Icon>
        <path d="M13 2L2 13.500h13" stroke="#fff" />
        <circle cx="8" cy="8" r="1" fill="#fff" />
      </Icon>
    </Status>
    <Status name="Object snap" on>
      <Icon>
        <path d="M6 3.500h8.500v11h-11V6" stroke="#fff" />
        <path d="M1.500 1.500h4v4h-4z" stroke="#fff" />
      </Icon>
    </Status>
    <StatusCaret name="Object snap options" />
    <Status name="Dynamic UCS" on width="w-5">
      <Icon>
        <path d="M4.500 3v9.500H13M2.500 5l2-3 2 3M11 10.500l3 2-3 2" stroke="#fff" />
        <path d="M11 2l-3 4h3l-2 4" stroke="#fff" />
      </Icon>
    </Status>
    <Status name="Annotation visibility" on width="w-5">
      <Icon>
        <path d="M7 2l2 5 5 7-4-3-2 1-2-1-4 3 3-7z" fill="#fff" stroke="none" />
        <circle cx="12.500" cy="4" r="2" stroke="#fff" />
      </Icon>
    </Status>
    <Status name="Auto scale">
      <Icon>
        <path d="M7 2l2 5 4 7-3-3-3 1-2-1-4 3 3-7z" fill="#dfe2e6" stroke="none" />
        <path d="M13 1l-2 4h3l-2 4" stroke="#dfe2e6" />
      </Icon>
    </Status>
    <Status name="Annotation objects">
      <Icon>
        <path d="M8 2l2 5 4 7-4-3-2 1-2-1-4 3 4-7z" fill="#dfe2e6" stroke="none" />
      </Icon>
    </Status>
    <Status name="Annotation scale" width="w-[29px]">
      1:1
      <Caret wide />
    </Status>
    <Status name="Workspace">
      <Settings className="size-[14px]" strokeWidth={4} />
    </Status>
    <StatusCaret name="Workspace options" />
    <Status name="Annotation monitor" width="w-[21px]">
      <Icon size="size-[14px]" box="0 0 14 14">
        <path d="M7 1v12M1 7h12" stroke="#dfe2e6" strokeWidth="2" />
      </Icon>
    </Status>
    <Status name="Isolate objects" width="w-[21px]">
      <Icon>
        <path d="M2 2h4v4H2zM7.500 9.500l3 5h-6z" />
        <circle cx="12" cy="8" r="2.500" />
      </Icon>
    </Status>
    <Status name="Clean screen" width="w-[21px]">
      <Icon>
        <path d="M1.500 3.500h13v9h-13zM4 10V8M4 10h2M12 6v2M12 6h-2" strokeWidth="1.200" />
      </Icon>
    </Status>
    <Status name="Customization" width="w-[21px]">
      <Icon size="size-[14px]" box="0 0 14 14">
        <path d="M0 2.500h14M0 7h14M0 11.500h14" stroke="#dfe2e6" strokeWidth="1.600" />
      </Icon>
    </Status>
  </div>
);

/* ---------- windows taskbar ---------- */

const TaskbarApp = ({
  name,
  state = "idle",
  children,
}: Kids & { name: string; state?: "idle" | "open" | "active" }) => (
  <button
    aria-label={name}
    className={clsx(
      "relative flex w-[41px] items-center justify-center",
      state === "active" && "bg-[#eef3f8]"
    )}
  >
    {children}
    {state === "open" && <span className="absolute inset-x-1 bottom-0 h-0.5 bg-[#0f6fc0]" />}
    {state === "active" && <span className="absolute inset-x-0 bottom-0 h-0.5 bg-[#0f6fc0]" />}
  </button>
);

const Taskbar = () => (
  <footer className="flex h-[34px] items-stretch border-t border-[#8d979f] bg-linear-to-r from-[#cce4ec] via-[#cfe2ee] to-[#d8dcec] font-['Open_Sans',sans-serif] text-black">
    <button aria-label="Start menu" className="flex w-[41px] shrink-0 items-center justify-center">
      <FaWindows className="size-[14px]" />
    </button>
    <label className="flex w-[285px] items-center bg-white pl-2 text-xs">
      <Search className="size-4 shrink-0 -scale-x-100 text-[#333]" strokeWidth={1.5} />
      <input
        aria-label="Search Windows"
        placeholder="Type here to search"
        className="ml-2 min-w-0 flex-1 placeholder:text-[#4a4a4a]"
      />
    </label>
    <div className="ml-1 flex">
      <TaskbarApp name="File Explorer">
        <Icon size="size-5" box="0 0 20 20">
          <path d="M1 2h8l1 2h8v4H1z" fill="#dca32c" stroke="none" />
          <path d="M1 5h18v12H1z" fill="#fbd564" stroke="none" />
          <path d="M4 18v-7h12v7h-3v-4H7v4z" fill="#4a94c9" stroke="none" />
        </Icon>
      </TaskbarApp>
      <TaskbarApp name="Mail">
        <Icon size="size-5" box="0 0 20 20">
          <path d="M0 7l10-6 10 6v3H0z" fill="#0f55a5" stroke="none" />
          <path d="M1 7h18l-9 8z" fill="#f3f7fb" stroke="none" />
          <path d="M0 7l10 7 10-7v12H0z" fill="#34a9ec" stroke="none" />
          <path d="M0 19l10-5 10-7v12z" fill="#1e8ad8" stroke="none" />
        </Icon>
      </TaskbarApp>
      <TaskbarApp name="Edge">
        <FaEdgeLegacy className="size-[17px] text-[#0b73cf]" />
      </TaskbarApp>
      <TaskbarApp name="WPS Writer">
        <Icon size="size-[18px]" box="0 0 18 18">
          <rect width="18" height="18" rx="2" fill="#3f80ec" stroke="none" />
          <path d="M3 5h3l2 7 2-5M8 5h6.500M15 5l-3 8-2-6" stroke="#fff" strokeWidth="1.300" />
        </Icon>
      </TaskbarApp>
      <TaskbarApp name="Sticky Notes" state="open">
        <Icon>
          <path d="M1 1h15v8l-7 7H1z" fill="#3b3d40" stroke="none" />
          <path d="M9 9h7l-7 7z" fill="#e7edf2" stroke="none" />
        </Icon>
      </TaskbarApp>
      <TaskbarApp name="Chrome" state="open">
        <Icon size="size-[18px]" box="0 0 18 18">
          <path d="M9 9L1.200 4.500A9 9 0 0 1 16.800 4.500z" fill="#d9483b" stroke="none" />
          <path d="M9 9l7.800-4.500A9 9 0 0 1 9 18z" fill="#f7c93c" stroke="none" />
          <path d="M9 9v9A9 9 0 0 1 1.200 4.500z" fill="#3a9b52" stroke="none" />
          <circle cx="9" cy="9" r="4" fill="#4a83ee" stroke="#f4f4f4" strokeWidth="1.200" />
        </Icon>
      </TaskbarApp>
      <TaskbarApp name="AutoCAD" state="active">
        <span className="flex size-[18px] items-center justify-center bg-[#f6dcd9] font-[Roboto,sans-serif] text-lg leading-none font-black text-[#b5202a]">
          A
        </span>
      </TaskbarApp>
      <TaskbarApp name="Recorder" state="open">
        <Icon size="size-5" box="0 0 20 20">
          <circle cx="10" cy="10" r="9" fill="#000" stroke="#b6bcc4" />
          <circle cx="10" cy="10" r="5.500" fill="#e62323" stroke="none" />
        </Icon>
      </TaskbarApp>
    </div>
    <div className="ml-auto flex items-center text-[#222]">
      <ChevronUp className="size-[14px]" strokeWidth={1.5} />
      <Mic className="ml-1.5 size-3 fill-black" />
      <BatteryMedium className="ml-2 size-[15px] fill-black" />
      <Volume2 className="ml-1 size-[14px]" strokeWidth={1.5} />
      <Wifi className="ml-2 size-[14px] text-[#333]" strokeWidth={1.5} />
      <span className="ml-2 text-[10px] text-[#444]">ENG</span>
      <div className="ml-2.5 w-12 text-center font-[Roboto,sans-serif] text-[10px] leading-[15px] text-[#333]">
        12:47 PM
        <br />
        5/5/2020
      </div>
      <button aria-label="Notifications" className="relative ml-[18px] size-[14px]">
        <Icon size="size-[14px]" box="0 0 14 14">
          <path d="M0 0h14v11H8l-3 3v-3H0z" fill="#000" stroke="none" />
          <path d="M2 3.500h10M2 6h10M2 8.500h6" stroke="#d8dcec" />
        </Icon>
        <span className="absolute top-1.5 left-1.5 flex size-3 items-center justify-center rounded-full border border-[#555] bg-[#d8dcec] text-[9px]">
          2
        </span>
      </button>
      <span className="mr-[3px] ml-2.5 h-8 w-px bg-[#a9afbf]" />
    </div>
  </footer>
);

export default function App() {
  return (
    <div className="flex min-h-screen flex-col bg-[#212830] font-[Roboto,'Open_Sans',sans-serif] text-[10px] leading-[14px]">
      <Header />
      <Ribbon />
      <FileTabs />
      <Viewport />
      <LayoutTabs />
      <StatusBar />
      <Taskbar />
    </div>
  );
}
